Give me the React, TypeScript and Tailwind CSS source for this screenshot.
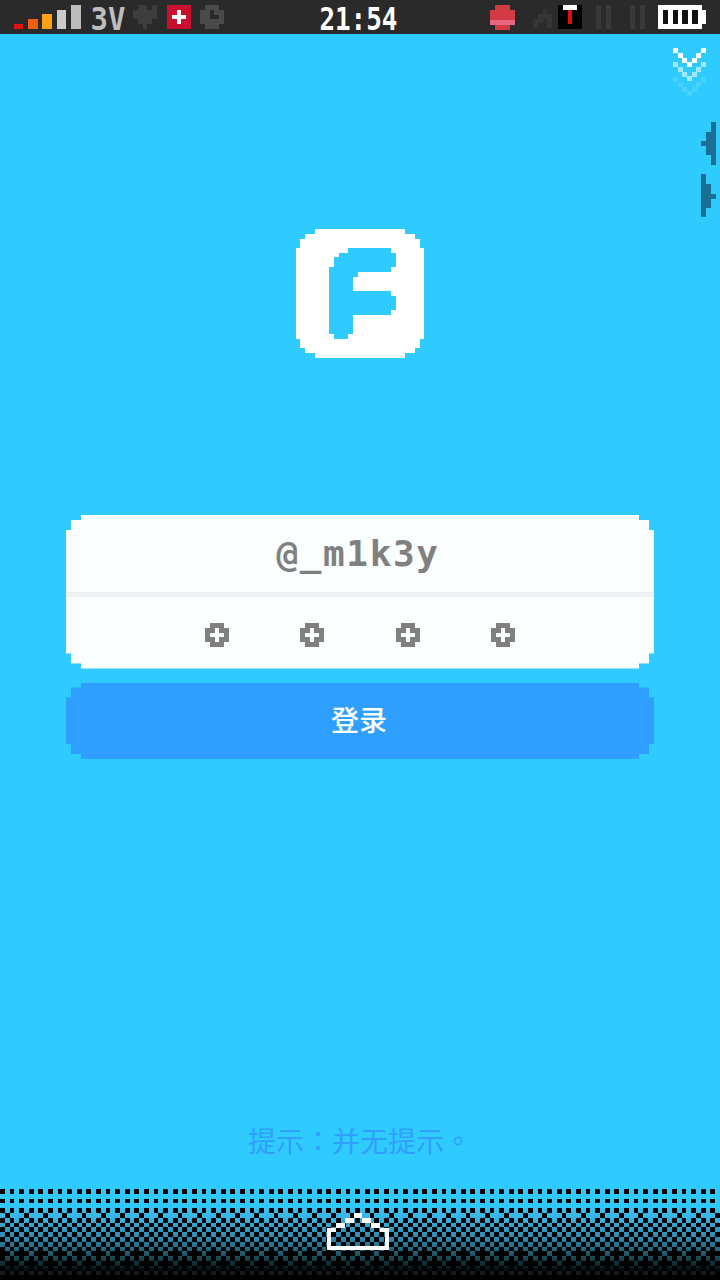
import React from "react";

const CORNER =
  "[clip-path:polygon(15px_0,calc(100%-15px)_0,calc(100%-15px)_5px,calc(100%-5px)_5px,calc(100%-5px)_15px,100%_15px,100%_calc(100%-15px),calc(100%-5px)_calc(100%-15px),calc(100%-5px)_calc(100%-5px),calc(100%-15px)_calc(100%-5px),calc(100%-15px)_100%,15px_100%,15px_calc(100%-5px),5px_calc(100%-5px),5px_calc(100%-15px),0_calc(100%-15px),0_15px,5px_15px,5px_5px,15px_5px)]";

function Px({ rows, colors, cell = 4.8 }: { rows: string[]; colors: Record<string, string>; cell?: number }) {
  const w = rows[0].length;
  const h = rows.length;
  return (
    <svg width={w * cell} height={h * cell} viewBox={`0 0 ${w} ${h}`} shapeRendering="crispEdges" className="block shrink-0">
      {rows.flatMap((r, y) =>
        r.split("").map((c, x) => (colors[c] ? <rect key={`${x}-${y}`} x={x} y={y} width={1.02} height={1.02} fill={colors[c]} /> : null))
      )}
    </svg>
  );
}

function Signal() {
  return (
    <svg width="67" height="24" viewBox="0 0 67 24" className="block shrink-0" shapeRendering="crispEdges">
      <rect x="0" y="19" width="9" height="5" fill="#e01212" />
      <rect x="14" y="14" width="10" height="10" fill="#ee5f12" />
      <rect x="28" y="9" width="10" height="15" fill="#ffa012" />
      <rect x="43" y="5" width="9" height="19" fill="#cbcbcb" />
      <rect x="57" y="0" width="10" height="24" fill="#bcbcbc" />
    </svg>
  );
}

function Battery() {
  return (
    <svg width="48" height="24" viewBox="0 0 48 24" className="block shrink-0" shapeRendering="crispEdges">
      <rect x="0" y="0" width="44" height="24" fill="#fff" />
      <rect x="44" y="5" width="4" height="14" fill="#fff" />
      <rect x="5" y="5" width="5" height="14" fill="#111" />
      <rect x="15" y="5" width="5" height="14" fill="#111" />
      <rect x="24" y="5" width="6" height="14" fill="#111" />
      <rect x="34" y="5" width="6" height="14" fill="#111" />
    </svg>
  );
}

function Pause() {
  return (
    <svg width="16" height="24" viewBox="0 0 16 24" className="block shrink-0" shapeRendering="crispEdges">
      <rect x="0" y="0" width="5" height="24" fill="#393939" />
      <rect x="10" y="0" width="5" height="24" fill="#393939" />
    </svg>
  );
}

function Logo() {
  return (
    <svg width="150" height="150" viewBox="0 0 450 450" className="block shrink-0" shapeRendering="crispEdges">
      <polygon
        fill="#fff"
        points="90,28 360,28 360,42 390,42 390,57 404,57 404,85 417,85 417,358 404,358 404,385 390,385 390,400 360,400 360,414 90,414 90,400 60,400 60,385 46,385 46,358 32,358 32,85 46,85 46,57 60,57 60,42 90,42"
      />
      <polygon
        fill="#2fcbff"
        points="190,85 318,85 318,100 332,100 332,140 318,140 318,155 218,155 218,170 204,170 204,212 318,212 318,228 332,228 332,270 318,270 318,285 204,285 204,342 190,342 190,356 148,356 148,342 133,342 133,140 148,140 148,112 162,112 162,100 190,100"
      />
    </svg>
  );
}

function Chevrons() {
  const v = [
    [0, 0], [28, 0], [5, 5], [23, 5], [9, 10], [19, 10], [14, 14],
  ];
  return (
    <svg width="33" height="50" viewBox="0 0 33 50" className="block" shapeRendering="crispEdges">
      {[
        { dy: 0, o: 1 },
        { dy: 14, o: 0.55 },
        { dy: 28.5, o: 0.12 },
      ].map((g) =>
        v.map(([x, y]) => <rect key={`${g.dy}-${x}-${y}`} x={x} y={y + g.dy} width="5" height="5" fill="#ffffff" opacity={g.o} />)
      )}
    </svg>
  );
}

function Arrows() {
  return (
    <svg width="15" height="95" viewBox="0 0 45 285" className="block" shapeRendering="crispEdges">
      <polygon fill="#1b6e94" points="30,0 45,0 45,130 30,130 30,100 15,100 15,73 0,73 0,58 15,58 15,30 30,30" />
      <polygon fill="#1b6e94" points="0,157 15,157 15,187 30,187 30,215 45,215 45,230 30,230 30,258 15,258 15,285 0,285" />
    </svg>
  );
}

function Dither() {
  const cols = 150;
  const rects: React.ReactNode[] = [];
  const on = (r: number, c: number) => {
    if (r <= 4) return r % 2 === 0 && c % 2 === 0;
    if (r === 5) return c % 4 === 1;
    if (r <= 12) return (r + c) % 2 === 0;
    if (r === 13) return c % 2 === 1 || c % 4 === 0;
    if (r === 14) return c % 2 === 0;
    if (r === 15) return c % 2 === 1 || c % 4 === 2;
    if (r === 16) return c % 2 === 0;
    return true;
  };
  for (let r = 0; r < 19; r++) {
    for (let c = 0; c < cols; c++) {
      if (on(r, c)) rects.push(<rect key={`${r}-${c}`} x={c} y={r} width="1.01" height="1.01" fill="#000" />);
    }
  }
  const dim: React.ReactNode[] = [];
  for (let c = 0; c < cols; c += 2) {
    dim.push(<rect key={c} x={c} y={17} width="1" height="1" fill="#1a1a1a" />);
  }
  return (
    <svg width="720" height="91.2" viewBox="0 0 150 19" className="block" shapeRendering="crispEdges">
      <defs>
        <linearGradient id="dg" x1="0" y1="0" x2="0" y2="1">
          <stop offset="0.15" stopColor="#2fcbff" />
          <stop offset="0.32" stopColor="#38b4e4" />
          <stop offset="0.56" stopColor="#2a85a8" />
          <stop offset="0.72" stopColor="#1c5564" />
          <stop offset="0.83" stopColor="#0d2b30" />
          <stop offset="0.92" stopColor="#000" />
        </linearGradient>
      </defs>
      <rect width="150" height="19" fill="url(#dg)" />
      {rects}
      {dim}
    </svg>
  );
}

function Home() {
  const bars = [
    [0, 43, 28, 13],
    [26, 30, 29, 13],
    [55, 15, 27, 14],
    [80, 0, 26, 15],
    [104, 15, 27, 14],
    [131, 30, 29, 13],
    [158, 43, 28, 13],
    [0, 43, 12, 67],
    [174, 43, 12, 67],
    [0, 98, 186, 12],
  ];
  return (
    <svg width="62" height="37" viewBox="0 0 186 110" className="block" shapeRendering="crispEdges">
      {bars.map(([x, y, w, h]) => (
        <rect key={`${x}-${y}-${w}`} x={x} y={y} width={w} height={h} fill="#fff" />
      ))}
    </svg>
  );
}

const CJK = "font-['Noto_Sans_CJK_SC','Noto_Sans',sans-serif]";
const CJKTC = "font-['Noto_Sans_CJK_TC','Noto_Sans',sans-serif]";
const MONO = "font-['DejaVu_Sans_Mono',monospace] font-bold";

export default function App() {
  const dot = [".XXX.", "XX.XX", "X...X", "XX.XX", ".XXX."];
  return (
    <div className="relative flex h-[1280px] w-[720px] flex-col overflow-hidden bg-[#2fcbff]">
      <header className="flex h-[34px] shrink-0 items-center bg-[#2a2a2a] pl-[14px]">
        <Signal />
        <span className={`${MONO} ml-[7.55px] mt-[3px] shrink-0 scale-x-[0.92] text-[31.5px] leading-[34px] text-[#bdbdbd]`}>3V</span>
        <div className="ml-[6.55px]">
          <Px rows={[".XX.X", "XXXXX", "XXXXX", ".XXX.", "..X.."]} colors={{ X: "#3d3d3d" }} />
        </div>
        <div className="ml-[10px]">
          <Px rows={["RRRRR", "RRWRR", "RWWWR", "RRWRR", "RRRRR"]} colors={{ R: "#c8102e", W: "#ffffff" }} />
        </div>
        <div className="ml-[9px]">
          <Px rows={[".XXX.", "XXYXX", "XXYYX", "XXXXX", ".XXX."]} colors={{ X: "#4a4a4a", Y: "#2a2a2a" }} />
        </div>
        <span className={`${MONO} ml-[86.6px] mt-[3px] shrink-0 scale-x-[0.823] text-[31.5px] leading-[34px] text-white`}>21:54</span>
        <div className="ml-[84.6px]">
          <Px rows={[".RRR.", "RRRRR", "RRRRR", "PPPPP", ".RRR."]} colors={{ R: "#d23a44", P: "#e8677f" }} cell={5} />
        </div>
        <div className="ml-[18px] mt-[4px]">
          <Px rows={["..X.", ".XXX", "XX.X", "X..X"]} colors={{ X: "#353535" }} />
        </div>
        <div className="ml-[6px]">
          <Px rows={["BWWWB", "BBRBB", "BBRBB", "BBRBB", "BBBBB"]} colors={{ B: "#000000", W: "#ffffff", R: "#e01010" }} />
        </div>
        <div className="ml-[14px]">
          <Pause />
        </div>
        <div className="ml-[18px]">
          <Pause />
        </div>
        <div className="ml-[12px]">
          <Battery />
        </div>
      </header>

      <div className="absolute left-[673px] top-[48px]">
        <Chevrons />
      </div>
      <div className="absolute left-[701px] top-[121.5px]">
        <Arrows />
      </div>

      <main className="flex flex-1 flex-col items-center">
        <div className="mt-[186px]">
          <Logo />
        </div>
        <div className={`mt-[145px] flex h-[153.5px] w-[588px] flex-col bg-[#fbfefe] ${CORNER}`}>
          <div className="flex h-[77px] items-center justify-center pr-[4px]">
            <span className={`${MONO} text-[36px] leading-none tracking-[1.6px] text-[#808080]`}>@_m1k3y</span>
          </div>
          <div className="h-[5px] bg-[#eef1f1]" />
          <div className="flex flex-1 items-center justify-center gap-[71.5px] pt-[4px]">
            <Px rows={dot} colors={{ X: "#808080" }} />
            <Px rows={dot} colors={{ X: "#808080" }} />
            <Px rows={dot} colors={{ X: "#808080" }} />
            <Px rows={dot} colors={{ X: "#808080" }} />
          </div>
        </div>
        <button
          className={`mt-[14px] flex h-[76.5px] w-[588px] items-center justify-center bg-[#2f9fff] pr-[2px] pb-[3px] ${CORNER} ${CJK} text-[28px] font-medium text-white`}
        >
          登录
        </button>
        <div className="flex-1" />
        <p className={`${CJKTC} mb-[29px] text-[28px] leading-[40px] text-[#2f9fff]`}>提示：并无提示。</p>
      </main>

      <footer className="relative h-[91.2px] shrink-0">
        <Dither />
        <div className="absolute left-[327px] top-[24.2px]">
          <Home />
        </div>
      </footer>
    </div>
  );
}
